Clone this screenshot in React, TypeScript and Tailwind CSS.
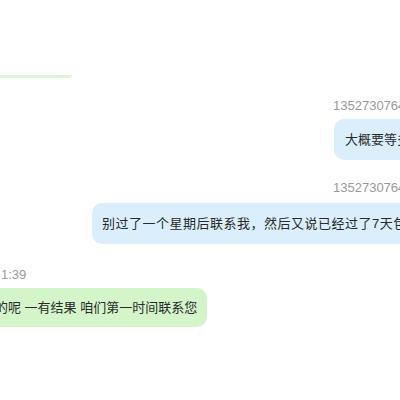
import React from "react";

const FONT = { fontFamily: '"Liberation Sans", "Noto Sans CJK SC", sans-serif' };

function Name({ text, className }: { text: string; className: string }) {
  return (
    <div className={`h-4 leading-4 text-[13px] text-[#999999] whitespace-nowrap w-max ${className}`}>
      {text}
    </div>
  );
}

function Bubble({ text, className }: { text: string; className: string }) {
  return (
    <div
      className={`w-max whitespace-nowrap flex items-center rounded-[10px] text-[13px] text-[#2a2a2a] ${className}`}
    >
      {text}
    </div>
  );
}

export default function App() {
  return (
    <div className="w-[400px] h-[400px] overflow-hidden bg-white flex flex-col items-start" style={FONT}>
      {/* tail of the previous (green) message */}
      <div className="mt-[75px] h-[3px] w-[72px] bg-[#ddf4d5] rounded-br-[3px]" />

      <Name text="13527307645" className="mt-[20px] ml-[333px]" />
      <Bubble
        text="大概要等多久才能退款呢"
        className="mt-[5px] ml-[334px] h-[41px] pl-[11px] pr-3 bg-[#daeefb]"
      />

      <Name text="13527307645" className="mt-[20px] ml-[333px]" />
      <Bubble
        text="别过了一个星期后联系我，然后又说已经过了7天包退期了"
        className="mt-[7px] ml-[92px] h-[41px] pl-[10px] pr-3 bg-[#daeefb] tracking-[0.5px]"
      />

      <Name text="1:39" className="mt-[23px] ml-[1px]" />
      <Bubble
        text="的呢 一有结果 咱们第一时间联系您"
        className="mt-[5px] ml-[-15px] h-[39px] pl-[10px] pr-[10px] bg-[#d4f5ca]"
      />
    </div>
  );
}
